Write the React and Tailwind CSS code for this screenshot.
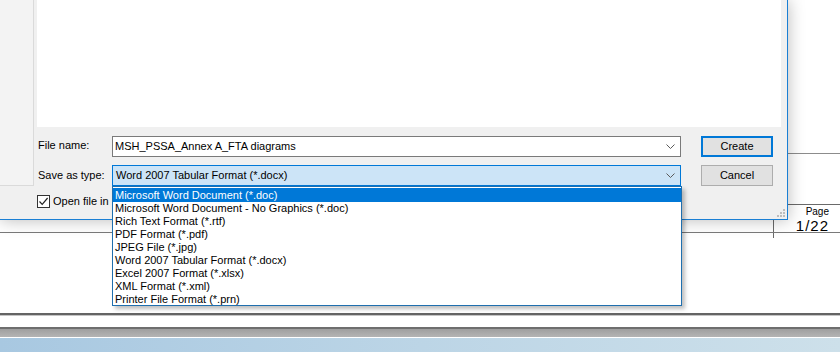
import React from 'react';

const saveTypes = [
  'Microsoft Word Document (*.doc)',
  'Microsoft Word Document - No Graphics (*.doc)',
  'Rich Text Format (*.rtf)',
  'PDF Format (*.pdf)',
  'JPEG File (*.jpg)',
  'Word 2007 Tabular Format (*.docx)',
  'Excel 2007 Format (*.xlsx)',
  'XML Format (*.xml)',
  'Printer File Format (*.prn)',
];

const Chevron = () => (
  <svg width="9" height="5" viewBox="0 0 9 5" className="shrink-0">
    <path d="M0.5 0.5 L4.5 4.5 L8.5 0.5" fill="none" stroke="#5a5a5a" strokeWidth="1" />
  </svg>
);

const Grip = () => (
  <svg width="8" height="8" viewBox="0 0 8 8">
    {[[6, 0], [6, 3], [3, 3], [6, 6], [3, 6], [0, 6]].map(([x, y]) => (
      <rect key={`${x}-${y}`} x={x} y={y} width="2" height="2" fill="#bdbdbd" />
    ))}
  </svg>
);

const App = () => {
  return (
    <div className="relative w-[840px] h-[352px] overflow-hidden bg-white font-['Liberation_Sans',Arial,sans-serif] text-[11px] text-black">
      {/* document behind the dialog */}
      <div className="h-[153px]" />
      <div className="h-[51px] border-t border-[#8c8c8c]" />
      <div className="flex h-[28px] border-t border-[#6a6a6a]">
        <div className="flex-1" />
        <div className="w-[67px] border-l border-[#6a6a6a] flex flex-col items-end pr-[11px] leading-none">
          <span className="text-[10px] mt-[2px]">Page</span>
          <span className="text-[15px] tracking-[1px] mt-px">1/22</span>
        </div>
      </div>
      <div className="flex h-[6px] border-t border-[#7a7a7a]">
        <div className="flex-1" />
        <div className="w-[67px] border-l border-[#6a6a6a]" />
      </div>
      <div className="h-[75px]" />
      <div className="h-[2px] bg-[#646464]" />
      <div className="h-px bg-[#c4c4c4]" />
      <div className="h-[11px]" />
      <div className="h-[2px] bg-[#6e6e6e]" />
      <div className="h-[8px] bg-gradient-to-b from-[#9f9f9f] to-[#b4b4b4]" />
      <div className="h-px bg-white" />
      <div className="h-[15px] bg-gradient-to-r from-[#a8c8e1] via-[#bcd5e6] to-[#cde0ea]" />

      {/* save dialog */}
      <div className="absolute left-0 top-0 z-10 flex w-[788px] h-[220px] bg-[#f0f0f0] border-r border-b border-[#1a7fd4] shadow-[0_0_16px_rgba(0,0,0,0.28)]">
        <div className="w-[34px] h-[186px] shrink-0 bg-[#f3f3f3] border-r border-b border-[#dadada]" />
        <div className="flex-1 flex flex-col">
          <div className="ml-[3px] mr-[6px] h-[127px] bg-white" />

          <div className="flex items-center mt-[9px] h-[21px] pl-[4px]">
            <span className="w-[74px] -mt-[3px]">File name:</span>
            <div className="w-[569px] h-[21px] flex items-center justify-between bg-white border border-[#7a7a7a] pl-[2px] pr-[5px]">
              <span>MSH_PSSA_Annex A_FTA diagrams</span>
              <Chevron />
            </div>
            <button className="ml-[20px] w-[72px] h-[21px] bg-[#e1e1e1] border-2 border-[#0078d7] flex items-center justify-center">
              Create
            </button>
          </div>

          <div className="flex items-center mt-[8px] h-[21px] pl-[4px]">
            <span className="w-[74px]">Save as type:</span>
            <div className="w-[569px] h-[21px] flex items-center justify-between bg-[#cce4f7] border border-[#0078d7] pl-[3px] pr-[5px]">
              <span>Word 2007 Tabular Format (*.docx)</span>
              <Chevron />
            </div>
            <button className="ml-[20px] w-[72px] h-[21px] bg-[#e1e1e1] border border-[#adadad] flex items-center justify-center">
              Cancel
            </button>
          </div>

          <div className="flex items-center mt-[7px] pl-[3px] gap-[3px]">
            <div className="w-[13px] h-[13px] shrink-0 bg-white border border-[#333] flex items-center justify-center">
              <svg width="11" height="11" viewBox="0 0 11 11">
                <path d="M1.5 5.5 L4.2 8.3 L9.6 2" fill="none" stroke="#222" strokeWidth="1.2" />
              </svg>
            </div>
            {/* the rest of the label sits under the open list */}
            <span className="w-[58px] overflow-hidden whitespace-nowrap">Open file in editor</span>
          </div>
        </div>
        <div className="absolute right-[2px] bottom-[2px]">
          <Grip />
        </div>
      </div>

      {/* open file-type list */}
      <div className="absolute left-[112px] top-[186px] z-20 w-[570px] h-[120px] bg-white border border-[#1f6fae] shadow-[3px_3px_4px_rgba(0,0,0,0.25)] pt-px">
        {saveTypes.map((t, i) => (
          <div
            key={t}
            className={i === 0
              ? 'h-[14px] leading-[14px] pl-[2px] bg-[#0078d7] text-white'
              : 'h-[13px] leading-[13px] pl-[2px]'}
          >
            {t}
          </div>
        ))}
      </div>
    </div>
  );
};

export default App;
